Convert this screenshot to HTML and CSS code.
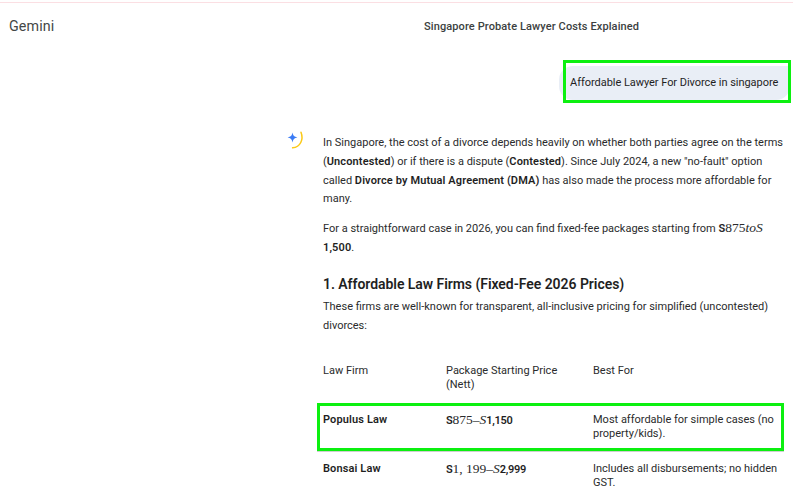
FILE: index.html
```html
<!DOCTYPE html>
<html lang="en">
<head>
<meta charset="utf-8">
<title>Gemini</title>
<link rel="stylesheet" href="styles.css">
</head>
<body>
<div class="page">
  <header class="top">
    <div class="brand">Gemini</div>
    <div class="title">Singapore Probate Lawyer Costs Explained</div>
  </header>
  <div class="query-row">
    <div class="bubble">Affordable Lawyer For Divorce in singapore<span class="mark mark-bubble"></span></div>
  </div>
  <main class="answer">
    <div class="avatar">
      <svg width="22" height="24" viewBox="0 0 22 24" aria-hidden="true">
        <path d="M7.5 4.6C8 7.7 9.2 8.9 12.4 9.5 9.2 10.1 8 11.3 7.5 14.4 7 11.3 5.8 10.1 2.6 9.5 5.8 8.9 7 7.7 7.5 4.6Z" fill="#3b7cf5"/>
        <path d="M16 4.2C18.8 11.6 15.4 19 7.6 19.8" fill="none" stroke="#fbc916" stroke-width="1.5" stroke-linecap="round"/>
      </svg>
    </div>
    <div class="content">
      <p class="para">In Singapore, the cost of a divorce depends heavily on whether both parties agree on the terms (<b>Uncontested</b>) or if there is a dispute (<b>Contested</b>). Since July 2024, a new "no-fault" option called <b>Divorce by Mutual Agreement (DMA)</b> has also made the process more affordable for many.</p>
      <p class="para para-second">For a straightforward case in 2026, you can find fixed-fee packages starting from <b>S</b><span class="math">875<i>toS</i></span><br><b>1,500</b>.</p>
      <h2 class="heading">1. Affordable Law Firms (Fixed-Fee 2026 Prices)</h2>
      <p class="para">These firms are well-known for transparent, all-inclusive pricing for simplified (uncontested) divorces:</p>
      <div class="table">
        <div class="row row-head">
          <div class="cell">Law Firm</div>
          <div class="cell">Package Starting Price (Nett)</div>
          <div class="cell">Best For</div>
        </div>
        <div class="row row-body">
          <div class="cell"><b>Populus Law</b></div>
          <div class="cell price"><b>S</b><span class="math">875–<i>S</i></span><b>1,150</b></div>
          <div class="cell">Most affordable for simple cases (no property/kids).</div>
          <span class="mark mark-row"></span>
        </div>
        <div class="row row-body">
          <div class="cell"><b>Bonsai Law</b></div>
          <div class="cell price"><b>S</b><span class="math">1, 199–<i>S</i></span><b>2,999</b></div>
          <div class="cell">Includes all disbursements; no hidden GST.</div>
        </div>
      </div>
    </div>
  </main>
</div>
</body>
</html>
```
FILE: styles.css
```css
* { box-sizing: border-box; }
html, body { margin: 0; height: 100%; overflow: hidden; background: #fff; }
body { font-family: Roboto, "Noto Sans", sans-serif; color: #1f1f1f; padding-top: 2px; }
.page { height: 497px; overflow: hidden; border-top: 1px solid #fbdfe3; }
.top { display: flex; align-items: center; height: 46px; padding-left: 9px; }
.brand { width: 415px; font-size: 14.3px; color: #444746; letter-spacing: .1px; }
.title { font-size: 11px; font-weight: 500; color: #3c3f41; letter-spacing: .11px; }
.query-row { display: flex; justify-content: flex-end; padding: 17px 3px 0 0; }
.bubble { position: relative; height: 34px; width: 231px; padding: 0 0 2px 11px; display: flex; align-items: center; background: #e9eef6; border-radius: 14px 0 14px 14px; font-size: 11px; color: #1f1f1f; letter-spacing: -.04px; }
.mark { position: absolute; border: 3px solid #0cf010; pointer-events: none; }
.mark-bubble { left: 4px; right: -1px; top: -6px; bottom: -3px; }
.answer { display: flex; padding: 34px 0 0 285px; }
.avatar { width: 38px; flex: none; margin-top: -6px; line-height: 0; }
.content { width: 465px; font-size: 11px; line-height: 18.8px; color: #2a2b2c; }
.para { margin: 0; }
.para-second { margin-top: 10px; }
.para b, .cell b { font-weight: 600; letter-spacing: .12px; color: #1f1f1f; }
.price b { letter-spacing: -.3px; }
.math { font-family: "Liberation Serif", "DejaVu Serif", serif; font-size: 13.5px; }
.heading { margin: 16px 0 0; padding-bottom: 4px; font-size: 14px; line-height: 20px; font-weight: 600; letter-spacing: -.05px; color: #1f1f1f; }
.table { margin-top: 22.5px; }
.row { display: grid; grid-template-columns: 123px 147px 190px; position: relative; line-height: 14px; }
.row-head { height: 45px; padding-top: 6px; }
.row-head .cell:nth-child(2) { padding-right: 20px; }
.row-body { height: 49px; padding-top: 10px; }
.mark-row { left: -6px; top: 0; height: 48px; width: 467px; box-shadow: 0 1px 0 #cfcfcf; }
```
